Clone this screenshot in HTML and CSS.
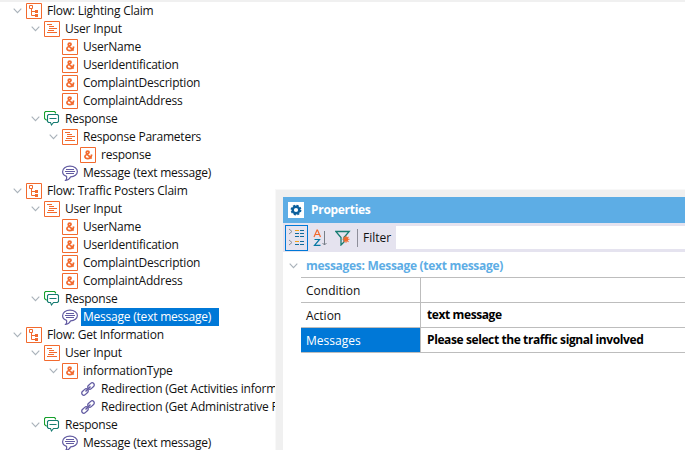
FILE: index.html
```
<!DOCTYPE html>
<html lang="en">
<head>
<meta charset="utf-8">
<title>Flow editor</title>
<link rel="stylesheet" href="styles.css">
</head>
<body>
<svg width="0" height="0" class="defs">
  <symbol id="chev" viewBox="0 0 9 6"><path d="M.7.7 4.5 4.6 8.3.7" fill="none" stroke="#a9b2ba" stroke-width="1.1"/></symbol>
  <symbol id="flow" viewBox="0 0 16 16"><g fill="none" stroke="#f26a2e"><path d="M.5.5h15v15H.5z"/><path d="M3.5 2.5h3v3h-3zM5.5 6v6.500H9M5.500 8.500H9"/></g><path d="M9 7h3v3H9zM9 11h3v3H9z" fill="#f26a2e"/></symbol>
  <symbol id="lines" viewBox="0 0 16 16"><path d="M.5.5h15v15H.5zM3 3.500h5M5 5.500h5M5 7.500h8M4 9.500h6M3 11.500h10" fill="none" stroke="#f26a2e"/></symbol>
  <symbol id="amp" viewBox="0 0 16 16"><path d="M.5.5h15v15H.5z" fill="none" stroke="#f26a2e"/><path d="M11.700 7.500c-.4 2.600-2 4.100-4 4.100-1.700 0-2.800-.8-2.800-2.100 0-2.100 4.200-2.200 4.200-4.200 0-.8-.6-1.200-1.400-1.200-.9 0-1.500.5-1.500 1.300 0 1.600 3.200 3.700 5.400 6.200" fill="none" stroke="#f26a2e" stroke-width="1.700"/></symbol>
  <symbol id="resp" viewBox="0 0 16 16"><path d="M2.500 9.500 2 8.500H1.500l-1-1v-6l1-1h9l1 1V2.500" fill="none" stroke="#16a02c" stroke-width="1.100"/><path d="M4.500 3.500h9l1 1v6l-1 1H9.500L7.500 14 6.500 11.500h-2l-1-1v-6z" fill="#fff" stroke="#177c72" stroke-width="1.100"/><path d="M5.500 7.500h7" stroke="#177c72"/></symbol>
  <symbol id="msg" viewBox="0 0 16 16"><path d="M4.500 11.300C2 10.600.6 9 .6 6.800.6 3.600 3.700 1.200 8 1.200s7.400 2.300 7.400 5.300-3.100 5.300-6.700 5.300C7.800 13.700 6 15.200 3.700 15.400c.9-1 1.200-2.500.8-4.100z" fill="#fff" stroke="#625ba2" stroke-width="1.200"/><path d="M4 4.500h8M3 6.500h10M4 8.500h8" stroke="#625ba2"/></symbol>
  <symbol id="link" viewBox="0 0 16 16"><g fill="none" stroke="#625ba2" stroke-width="1.300"><rect x="-3.700" y="-2.100" width="7.400" height="4.200" rx="2.100" transform="translate(5 11) rotate(-43)"/><rect x="-3.700" y="-2.100" width="7.400" height="4.200" rx="2.100" transform="translate(11 5) rotate(-43)"/><path d="M5.500 10.500l5-5" stroke-width="1.500"/></g></symbol>
</svg>
<ul class="tree">
  <li class="row"><svg class="chev"><use href="#chev"/></svg><svg class="ico"><use href="#flow"/></svg><span class="label">Flow: Lighting Claim</span></li>
  <li class="row l1"><svg class="chev"><use href="#chev"/></svg><svg class="ico"><use href="#lines"/></svg><span class="label">User Input</span></li>
  <li class="row l2 leaf"><svg class="ico"><use href="#amp"/></svg><span class="label">UserName</span></li>
  <li class="row l2 leaf"><svg class="ico"><use href="#amp"/></svg><span class="label">UserIdentification</span></li>
  <li class="row l2 leaf"><svg class="ico"><use href="#amp"/></svg><span class="label">ComplaintDescription</span></li>
  <li class="row l2 leaf"><svg class="ico"><use href="#amp"/></svg><span class="label">ComplaintAddress</span></li>
  <li class="row l1"><svg class="chev"><use href="#chev"/></svg><svg class="ico"><use href="#resp"/></svg><span class="label">Response</span></li>
  <li class="row l2"><svg class="chev"><use href="#chev"/></svg><svg class="ico"><use href="#lines"/></svg><span class="label">Response Parameters</span></li>
  <li class="row l3 leaf"><svg class="ico"><use href="#amp"/></svg><span class="label">response</span></li>
  <li class="row l2 leaf"><svg class="ico"><use href="#msg"/></svg><span class="label">Message (text message)</span></li>
  <li class="row"><svg class="chev"><use href="#chev"/></svg><svg class="ico"><use href="#flow"/></svg><span class="label">Flow: Traffic Posters Claim</span></li>
  <li class="row l1"><svg class="chev"><use href="#chev"/></svg><svg class="ico"><use href="#lines"/></svg><span class="label">User Input</span></li>
  <li class="row l2 leaf"><svg class="ico"><use href="#amp"/></svg><span class="label">UserName</span></li>
  <li class="row l2 leaf"><svg class="ico"><use href="#amp"/></svg><span class="label">UserIdentification</span></li>
  <li class="row l2 leaf"><svg class="ico"><use href="#amp"/></svg><span class="label">ComplaintDescription</span></li>
  <li class="row l2 leaf"><svg class="ico"><use href="#amp"/></svg><span class="label">ComplaintAddress</span></li>
  <li class="row l1"><svg class="chev"><use href="#chev"/></svg><svg class="ico"><use href="#resp"/></svg><span class="label">Response</span></li>
  <li class="row l2 leaf"><svg class="ico"><use href="#msg"/></svg><span class="label selected">Message (text message)</span></li>
  <li class="row"><svg class="chev"><use href="#chev"/></svg><svg class="ico"><use href="#flow"/></svg><span class="label">Flow: Get Information</span></li>
  <li class="row l1"><svg class="chev"><use href="#chev"/></svg><svg class="ico"><use href="#lines"/></svg><span class="label">User Input</span></li>
  <li class="row l2"><svg class="chev"><use href="#chev"/></svg><svg class="ico"><use href="#amp"/></svg><span class="label">informationType</span></li>
  <li class="row l3 leaf"><svg class="ico"><use href="#link"/></svg><span class="label">Redirection (Get Activities inform</span></li>
  <li class="row l3 leaf"><svg class="ico"><use href="#link"/></svg><span class="label">Redirection (Get Administrative P</span></li>
  <li class="row l1"><svg class="chev"><use href="#chev"/></svg><svg class="ico"><use href="#resp"/></svg><span class="label">Response</span></li>
  <li class="row l2 leaf"><svg class="ico"><use href="#msg"/></svg><span class="label">Message (text message)</span></li>
</ul>
<section class="panel">
  <header class="title">
    <svg class="gear" viewBox="0 0 16 16"><path fill="#fff" d="M0 0h16v16H0z"/><circle cx="8" cy="8" r="3.300" fill="none" stroke="#0b5f9c" stroke-width="2.400"/><circle cx="8" cy="8" r="4.700" fill="none" stroke="#0b5f9c" stroke-width="1.400" stroke-dasharray="2.100 1.591"/></svg>
    <span>Properties</span>
  </header>
  <div class="toolbar">
    <div class="tool on"><svg width="21" height="23" viewBox="0 0 21 23"><path d="M3 3l3 2.500L3 8M3 14l3 2.500L3 19" fill="none" stroke="#8a8f98"/><path d="M9 4.500h4" stroke="#f26a2e"/><path d="M9 15.500h4" stroke="#f3a21b"/><path d="M9 7.500h4M9 10.500h4M14 4.500h4M14 7.500h4M14 10.500h4M9 18.500h4M14 15.500h4M14 18.500h4" stroke="#126b9a"/><path d="M9 4.500h4" stroke="#f3a21b"/></svg></div>
    <svg class="sort" viewBox="0 0 14 18"><path d="M1 8 4 1h.500l3 7M2 5.500h5" fill="none" stroke="#f26a2e" stroke-width="1.200"/><path d="M1.500 10.500h5L1.500 16.400h6" fill="none" stroke="#0878a4" stroke-width="1.200"/><path d="M11.500 2v14M9.500 14l2 2 2-2" fill="none" stroke="#777e88"/></svg>
    <svg class="funnel" viewBox="0 0 16 16"><path d="M.8 1.500h13.400L9 7.500V12l-3 3V7.500z" fill="none" stroke="#177c72" stroke-width="1.300"/><path d="M11 5.800v7M7.500 9.300h7M8.500 6.800l5 5M13.500 6.800l-5 5" stroke="#f26a2e" stroke-width="1.100"/><circle cx="11" cy="9.300" r="2.200" fill="#f26a2e"/></svg>
    <span class="sep"></span>
    <span class="filter">Filter</span>
    <div class="input"></div>
  </div>
  <div class="props">
    <div class="group"><svg class="chev"><use href="#chev"/></svg><span>messages: Message (text message)</span></div>
    <div class="prop"><span class="key">Condition</span><span class="val"></span></div>
    <div class="prop"><span class="key">Action</span><span class="val v1">text message</span></div>
    <div class="prop"><span class="key active">Messages</span><span class="val">Please select the traffic signal involved</span></div>
    <div class="stub"></div>
  </div>
</section>
</body>
</html>
```
FILE: styles.css
```
* { box-sizing: border-box; }
body {
  margin: 0;
  width: 685px;
  height: 450px;
  overflow: hidden;
  position: relative;
  background: #fff;
  color: #111;
  font: 12px/18px "Open Sans", "Noto Sans", sans-serif;
}
svg { display: block; flex: none; }
.defs { position: absolute; }
.tree { list-style: none; margin: 0; padding: 0; border-top: 2px solid #f0f0f0; }
.row { display: flex; align-items: center; height: 18px; padding-left: 13px; white-space: nowrap; }
.l1 { padding-left: 31px; }
.l2 { padding-left: 49px; }
.l3 { padding-left: 67px; }
.leaf .ico { margin-left: 13px; }
.chev { width: 9px; height: 6px; margin-right: 4px; }
.ico { width: 16px; height: 16px; margin-right: 3px; }
.label { padding: 0 8px 0 2px; height: 18px; line-height: 17px; letter-spacing: -.22px; }
.selected { background: #0078d7; color: #fff; }
.panel {
  position: absolute;
  left: 275px;
  top: 189px;
  right: 0;
  bottom: 0;
  padding: 7px 0 0 7px;
  background: #fff;
  border: solid #f8f8f8;
  border-width: 1px 0 0 1px;
  box-shadow: inset 7px 7px #f0f0f0;
}
.title {
  display: flex;
  align-items: center;
  height: 26px;
  padding-left: 5px;
  background: #5dade5;
  color: #fff;
  font-weight: bold;
  letter-spacing: -.3px;
}
.gear { width: 16px; height: 16px; margin-right: 7px; }
.toolbar { display: flex; align-items: center; height: 29px; padding-left: 2px; background: #e5e3ef; }
.tool { width: 23px; height: 26px; border: 1px solid #0078d7; }
.sort { width: 14px; height: 18px; margin-left: 5px; }
.funnel { width: 16px; height: 16px; margin-left: 8px; }
.sep { width: 1px; height: 18px; background: #8e8e9a; margin-left: 6px; }
.filter { width: 38px; padding-left: 5px; }
.input { flex: 1; height: 23px; background: #fff; }
.props { display: flex; flex-direction: column; }
.group { display: flex; align-items: center; height: 25px; padding: 2px 0 0 6px; color: #5dade5; font-weight: bold; letter-spacing: -.3px; }
.group .chev { margin-right: 8px; }
.prop { display: flex; height: 25px; margin-left: 18px; border-top: 1px solid #bdbdbd; }
.key { width: 120px; border-right: 1px solid #bdbdbd; padding-left: 5px; line-height: 25px; }
.active { background: #0078d7 content-box; background-clip: padding-box; color: #fff; }
.val { flex: 1; padding-left: 6px; line-height: 24px; font-weight: bold; letter-spacing: -.4px; color: #000; }
.stub { height: 2px; margin-left: 18px; border-top: 1px solid #bdbdbd; }
```
